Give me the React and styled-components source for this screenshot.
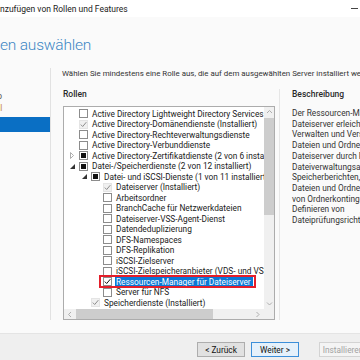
import styled, { createGlobalStyle } from 'styled-components';

const GlobalStyle = createGlobalStyle`
  html, body {
    margin: 0;
    padding: 0;
  }
  body {
    width: 360px;
    height: 360px;
    overflow: hidden;
    font-family: Roboto, "Noto Sans", "Liberation Sans", sans-serif;
    color: #1e1e1e;
  }
`;

const Window = styled.div`
  display: flex;
  flex-direction: column;
  width: 360px;
  height: 360px;
  background: #fafafa;
  overflow: hidden;
`;

const TitleBar = styled.div`
  height: 17px;
  flex: none;
  display: flex;
  align-items: center;
  justify-content: space-between;
  background: #fff;
  font-size: 8.5px;
  color: #222;
  white-space: nowrap;
`;

const Minimize = styled.span`
  width: 7px;
  height: 1px;
  margin-right: 2px;
  background: #444;
`;

const Header = styled.h1`
  height: 45px;
  flex: none;
  box-sizing: border-box;
  margin: 0;
  padding: 18px 0 0 0;
  font-size: 15.5px;
  line-height: 20px;
  font-weight: 300;
  letter-spacing: -0.2px;
  color: #3a86c4;
  white-space: nowrap;
`;

const Body = styled.div`
  flex: 1;
  display: flex;
  min-height: 0;
`;

const Nav = styled.div`
  width: 50px;
  flex: none;
  margin: 6px 0 13px;
  padding-top: 22px;
  border-right: 1px solid #e2e2e2;
  overflow: hidden;
`;

const NavItem = styled.div`
  height: ${(p) => (p.$active ? 15 : 12)}px;
  margin-top: ${(p) => (p.$active ? 3 : 0)}px;
  line-height: ${(p) => (p.$active ? 15 : 12)}px;
  font-size: 8.5px;
  white-space: nowrap;
  text-indent: ${(p) => p.$shift}px;
  color: ${(p) => (p.$active ? '#fff' : p.$warn ? '#c98a3c' : '#555')};
  background: ${(p) => (p.$active ? '#0a6fc4' : 'transparent')};
`;

const Content = styled.div`
  flex: 1;
  min-width: 0;
  display: flex;
  flex-direction: column;
  padding: 6px 0 0 11px;
`;

const Intro = styled.div`
  font-size: 7.9px;
  line-height: 12px;
  color: #333;
  white-space: nowrap;
`;

const Columns = styled.div`
  display: flex;
  margin-top: 9px;
  height: 231px;
`;

const RolesCol = styled.div`
  width: 212px;
  flex: none;
  margin-left: 1px;
  display: flex;
  flex-direction: column;
`;

const ColTitle = styled.div`
  font-size: 8.5px;
  line-height: 10px;
  font-weight: 500;
  margin-bottom: 7px;
  color: #2a2a2a;
  white-space: nowrap;
`;

const TreeBox = styled.div`
  height: 214px;
  box-sizing: border-box;
  border: 1px solid #acacac;
  background: #fff;
  display: grid;
  grid-template-columns: 1fr 10px;
  grid-template-rows: 1fr 10px;
`;

const RoleList = styled.div`
  overflow: hidden;
  padding-top: 1.5px;
`;

const Row = styled.div`
  height: 10.5px;
  display: flex;
  align-items: center;
  padding-left: ${(p) => 3 + p.$level * 12}px;
  font-size: 8.3px;
  white-space: nowrap;
  color: #1a1a1a;
`;

const ExpanderSlot = styled.span`
  width: 12px;
  flex: none;
  display: flex;
  align-items: center;
  padding-left: 3px;
  box-sizing: border-box;
`;

const Box = styled.span`
  width: 9px;
  height: 9px;
  flex: none;
  box-sizing: border-box;
  margin-right: 4px;
  display: flex;
  align-items: center;
  justify-content: center;
  border: 1px solid ${(p) => (p.$state === 'installed' ? '#e4e4e4' : '#8c8c8c')};
  background: ${(p) => (p.$state === 'installed' ? '#f0f0f0' : '#fff')};
`;

const Marked = styled.span`
  position: relative;
  display: flex;
  align-items: center;

  &::after {
    content: '';
    position: absolute;
    top: -2px;
    bottom: -1px;
    left: -4px;
    right: -3px;
    border: 2px solid #e41e2a;
  }
`;

const Highlight = styled.span`
  background: #0a78d6;
  color: #fff;
  line-height: 10.5px;
  padding: 0 2px 0 1px;
  margin-left: -1px;
`;

const VScroll = styled.div`
  display: flex;
  flex-direction: column;
  background: #f0f0f0;
`;

const HScroll = styled.div`
  display: flex;
  background: #f0f0f0;
`;

const Arrow = styled.span`
  flex: none;
  width: ${(p) => (p.$horizontal ? 12 : 10)}px;
  height: 10px;
  display: flex;
  align-items: center;
  justify-content: center;
`;

const Thumb = styled.span`
  flex: none;
  background: #cdcdcd;
  width: ${(p) => (p.$horizontal ? `${p.$size}px` : 'auto')};
  height: ${(p) => (p.$horizontal ? 'auto' : `${p.$size}px`)};
  margin-top: ${(p) => (p.$horizontal ? 0 : 1)}px;
`;

const Track = styled.span`
  flex: 1;
`;

const Corner = styled.div`
  background: #f0f0f0;
`;

const Divider = styled.div`
  width: 1px;
  flex: none;
  margin: 0 12px 0 4px;
  background: #e6e6e6;
`;

const DescCol = styled.div`
  flex: 1;
  min-width: 0;
  display: flex;
  flex-direction: column;
  white-space: nowrap;
`;

const DescText = styled.div`
  padding-top: 2px;
  font-size: 8.3px;
  line-height: 10.7px;
  color: #333;
`;

const Footer = styled.div`
  height: 27px;
  flex: none;
  box-sizing: border-box;
  display: flex;
  gap: 6px;
  padding: 8px 0 0 197px;
  background: #efefef;
  border-top: 1px solid #e4e4e4;
`;

const Button = styled.button`
  width: 48px;
  height: 15px;
  flex: none;
  padding: 0;
  font-family: inherit;
  font-size: 8.3px;
  white-space: nowrap;
  border: 1px solid ${(p) => (p.$primary ? '#3c8fd9' : p.disabled ? '#d3d3d3' : '#adadad')};
  background: ${(p) => (p.$primary ? '#e5f1fb' : p.disabled ? '#f4f4f4' : '#e1e1e1')};
  color: ${(p) => (p.disabled ? '#a2a2a2' : '#111')};
  margin-left: ${(p) => (p.$apart ? 14 : 0)}px;
`;

function Expander({ kind }) {
  if (kind === 'collapsed') {
    return (
      <ExpanderSlot>
        <svg width="4" height="7" viewBox="0 0 4 7">
          <path d="M0.5 0.5 L3.5 3.5 L0.5 6.5 Z" fill="none" stroke="#9a9a9a" strokeWidth="0.8" />
        </svg>
      </ExpanderSlot>
    );
  }
  if (kind === 'expanded') {
    return (
      <ExpanderSlot>
        <svg width="5" height="5" viewBox="0 0 5 5">
          <path d="M5 0 L5 5 L0 5 Z" fill="#333" />
        </svg>
      </ExpanderSlot>
    );
  }
  return <ExpanderSlot />;
}

function CheckBox({ state }) {
  return (
    <Box $state={state}>
      {state === 'partial' && (
        <svg width="5" height="5" viewBox="0 0 5 5">
          <rect width="5" height="5" fill="#111" />
        </svg>
      )}
      {(state === 'installed' || state === 'checked') && (
        <svg width="7" height="7" viewBox="0 0 7 7">
          <path
            d="M0.8 3.6 L2.7 5.5 L6.3 1.2"
            fill="none"
            stroke={state === 'checked' ? '#111' : '#8d8d8d'}
            strokeWidth="1"
          />
        </svg>
      )}
    </Box>
  );
}

function Chevron({ dir }) {
  const paths = {
    up: 'M1 4 L3.5 1.5 L6 4',
    down: 'M1 1.5 L3.5 4 L6 1.5',
    left: 'M4 1 L1.5 3.5 L4 6',
    right: 'M1.5 1 L4 3.5 L1.5 6',
  };
  const horizontal = dir === 'left' || dir === 'right';
  return (
    <svg width={horizontal ? 6 : 7} height={horizontal ? 7 : 6} viewBox={horizontal ? '0 0 6 7' : '0 0 7 6'}>
      <path d={paths[dir]} fill="none" stroke="#a6a6a6" strokeWidth="0.9" />
    </svg>
  );
}

const roles = [
  { level: 0, exp: 'none', check: 'empty', label: 'Active Directory Lightweight Directory Services' },
  { level: 0, exp: 'none', check: 'installed', label: 'Active Directory-Domänendienste (Installiert)' },
  { level: 0, exp: 'none', check: 'empty', label: 'Active Directory-Rechteverwaltungsdienste' },
  { level: 0, exp: 'none', check: 'empty', label: 'Active Directory-Verbunddienste' },
  { level: 0, exp: 'collapsed', check: 'partial', label: 'Active Directory-Zertifikatdienste (2 von 6 installiert)' },
  { level: 0, exp: 'expanded', check: 'partial', label: 'Datei-/Speicherdienste (2 von 12 installiert)' },
  { level: 1, exp: 'expanded', check: 'partial', label: 'Datei- und iSCSI-Dienste (1 von 11 installiert)' },
  { level: 2, exp: 'none', check: 'installed', label: 'Dateiserver (Installiert)' },
  { level: 2, exp: 'none', check: 'empty', label: 'Arbeitsordner' },
  { level: 2, exp: 'none', check: 'empty', label: 'BranchCache für Netzwerkdateien' },
  { level: 2, exp: 'none', check: 'empty', label: 'Dateiserver-VSS-Agent-Dienst' },
  { level: 2, exp: 'none', check: 'empty', label: 'Datendeduplizierung' },
  { level: 2, exp: 'none', check: 'empty', label: 'DFS-Namespaces' },
  { level: 2, exp: 'none', check: 'empty', label: 'DFS-Replikation' },
  { level: 2, exp: 'none', check: 'empty', label: 'iSCSI-Zielserver' },
  { level: 2, exp: 'none', check: 'empty', label: 'iSCSI-Zielspeicheranbieter (VDS- und VSS-Hardwareanbieter)' },
  { level: 2, exp: 'none', check: 'checked', label: 'Ressourcen-Manager für Dateiserver', selected: true },
  { level: 2, exp: 'none', check: 'empty', label: 'Server für NFS' },
  { level: 1, exp: 'none', check: 'installed', label: 'Speicherdienste (Installiert)' },
];

const description = [
  'Der Ressourcen-Manager für',
  'Dateiserver erleichtert das',
  'Verwalten und Verstehen der',
  'Dateien und Ordner auf einem',
  'Dateiserver durch Planen von',
  'Dateiverwaltungsaufgaben und',
  'Speicherberichten, Klassifizieren von',
  'Dateien und Ordnern, Konfigurieren',
  'von Ordnerkontingenten und',
  'Definieren von',
  'Dateiprüfungsrichtlinien.',
];

export default function App() {
  return (
    <Window>
      <GlobalStyle />
      <TitleBar>
        <span>nzufügen von Rollen und Features</span>
        <Minimize />
      </TitleBar>
      <Header>en auswählen</Header>
      <Body>
        <Nav>
          <NavItem $shift={-56}>Installationstyp</NavItem>
          <NavItem $shift={-53} $warn>Serverauswahl</NavItem>
          <NavItem $shift={-80} $active>Serverrollen</NavItem>
        </Nav>
        <Content>
          <Intro>
            Wählen Sie mindestens eine Rolle aus, die auf dem ausgewählten Server installiert werden soll.
          </Intro>
          <Columns>
            <RolesCol>
              <ColTitle>Rollen</ColTitle>
              <TreeBox>
                <RoleList>
                  {roles.map((r, i) => (
                    <Row key={i} $level={r.level}>
                      <Expander kind={r.exp} />
                      {r.selected ? (
                        <Marked>
                          <CheckBox state={r.check} />
                          <Highlight>{r.label}</Highlight>
                        </Marked>
                      ) : (
                        <>
                          <CheckBox state={r.check} />
                          <span>{r.label}</span>
                        </>
                      )}
                    </Row>
                  ))}
                </RoleList>
                <VScroll>
                  <Arrow>
                    <Chevron dir="up" />
                  </Arrow>
                  <Thumb $size={97} />
                  <Track />
                  <Arrow>
                    <Chevron dir="down" />
                  </Arrow>
                </VScroll>
                <HScroll>
                  <Arrow $horizontal>
                    <Chevron dir="left" />
                  </Arrow>
                  <Thumb $horizontal $size={137} />
                  <Track />
                  <Arrow $horizontal>
                    <Chevron dir="right" />
                  </Arrow>
                </HScroll>
                <Corner />
              </TreeBox>
            </RolesCol>
            <Divider />
            <DescCol>
              <ColTitle>Beschreibung</ColTitle>
              <DescText>
                {description.map((line) => (
                  <div key={line}>{line}</div>
                ))}
              </DescText>
            </DescCol>
          </Columns>
        </Content>
      </Body>
      <Footer>
        <Button>&lt; Zurück</Button>
        <Button $primary>Weiter &gt;</Button>
        <Button $apart disabled>
          Installieren
        </Button>
      </Footer>
    </Window>
  );
}
